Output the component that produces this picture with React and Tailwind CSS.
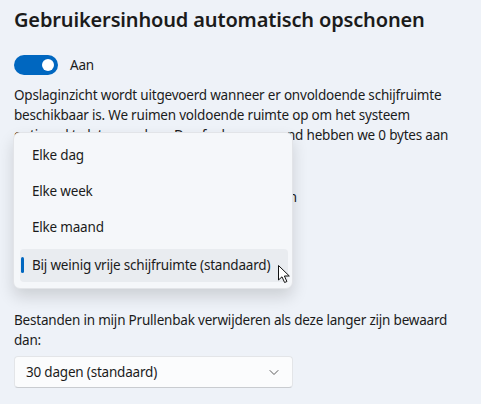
import React from 'react';

const font = { fontFamily: '"Segoe UI", "Noto Sans", sans-serif' };

function Cursor() {
    return (
        <svg width="16" height="20" viewBox="0 0 16 20" className="absolute left-[277px] top-[264px]">
            <path d="M1.5 1.5 L1.5 16 L5 12.8 L7.6 18.5 L9.9 17.5 L7.4 12 L12.3 12 Z" fill="#fff" stroke="#111" strokeWidth="1" strokeLinejoin="round" />
        </svg>
    );
}

export default function App() {
    const options = ['Elke dag', 'Elke week', 'Elke maand', 'Bij weinig vrije schijfruimte (standaard)'];

    return (
        <div className="relative w-[481px] h-[404px] overflow-hidden bg-[#eef2f8] text-[#1b1b1b] text-[13.5px] tracking-[-0.2px]" style={font}>
            <div className="px-[14px] pt-[6px]">
                <h1 className="text-[20px] leading-[28px] font-semibold tracking-[-0.15px]">Gebruikersinhoud automatisch opschonen</h1>

                <div className="flex items-center gap-3 mt-[21px]">
                    <div className="w-[44px] h-[20px] rounded-full bg-[#0067c0] flex items-center justify-end pr-[4px]">
                        <div className="w-[12px] h-[12px] rounded-full bg-white" />
                    </div>
                    <span>Aan</span>
                </div>

                <p className="leading-[20px] mt-[10px] w-[445px]">
                    Opslaginzicht wordt uitgevoerd wanneer er onvoldoende schijfruimte beschikbaar is. We ruimen voldoende ruimte op om het systeem optimaal te laten werken. De afgelopen maand hebben we 0 bytes aan ruimte opgeschoond.
                </p>

                <p className="leading-[20px] mt-[22px] w-[283px] text-right">Tijdelijke bestanden van apps verwijderen</p>

                <div className="h-[31px] w-[270px] mt-[8px] rounded bg-[#fbfbfb] border border-[#e5e5e5]" />

                <p className="leading-[20px] mt-[64px] w-[445px]">
                    Bestanden in mijn Prullenbak verwijderen als deze langer zijn bewaard dan:
                </p>

                <div className="mt-[6px] h-[32px] w-[279px] rounded-[4px] bg-[#fbfcfd] border border-[#e3e5e8] border-b-[#c9ccd0] flex items-center justify-between pl-[11px] pr-[12px]">
                    <span>30 dagen (standaard)</span>
                    <svg width="12" height="12" viewBox="0 0 12 12">
                        <path d="M2 4.5 L6 8.5 L10 4.5" fill="none" stroke="#5d5d5d" strokeWidth="1" strokeLinecap="round" strokeLinejoin="round" />
                    </svg>
                </div>
            </div>

            <div className="absolute left-[13px] top-[132px] w-[280px] rounded-[7px] bg-[#f5f7fa] border border-[#e2e4e8] shadow-[0_8px_16px_rgba(0,0,0,0.14)] pl-[6px] pr-[4px] py-[6px] flex flex-col gap-[3px]">
                {options.map((o, i) => (
                    <div key={o} className={`relative h-[33px] rounded-[4px] flex items-center pl-[12px] ${i === 3 ? 'bg-[#e9ecf0] mt-[2px]' : ''}`}>
                        {i === 3 && <div className="absolute left-[1px] top-[8px] w-[3px] h-[16px] rounded-full bg-[#0067c0]" />}
                        {o}
                    </div>
                ))}
            </div>

            <Cursor />
        </div>
    );
}
